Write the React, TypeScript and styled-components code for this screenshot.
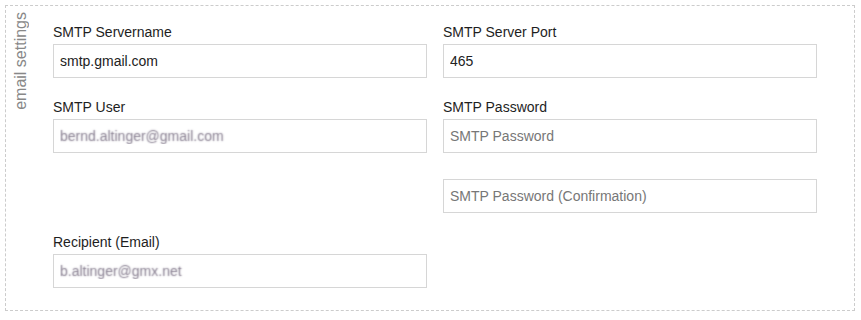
import React from 'react';
import styled, { createGlobalStyle } from 'styled-components';

const GlobalStyle = createGlobalStyle`
  html, body {
    margin: 0;
    padding: 0;
    background: #ffffff;
  }
  body {
    font-family: 'Liberation Sans', Arial, sans-serif;
    font-size: 14px;
    color: #222;
  }
  * {
    box-sizing: border-box;
  }
`;

const Fieldset = styled.fieldset`
  display: flex;
  align-items: flex-start;
  width: 850px;
  height: 306px;
  margin: 5px 6px 9px 5px;
  padding: 0 37px 22px 0;
  border: 1px dashed #cccccc;
  min-width: 0;
`;

const Legend = styled.div`
  flex: 0 0 18px;
  margin: 6px 23px 0 6px;
  writing-mode: vertical-rl;
  transform: rotate(180deg);
  font-size: 16px;
  line-height: 18px;
  color: #888888;
  white-space: nowrap;
`;

const Form = styled.div`
  display: grid;
  grid-template-columns: 374px 374px;
  column-gap: 16px;
  row-gap: 19px;
  margin-top: 16px;
`;

const Field = styled.div<{ $offset?: number }>`
  display: flex;
  flex-direction: column;
  margin-top: ${(p) => p.$offset || 0}px;
`;

const Label = styled.label`
  display: block;
  line-height: 20px;
  margin-bottom: 2px;
  font-size: 14px;
  color: #1e1e1e;
`;

const Input = styled.input<{ $blurred?: boolean }>`
  width: 100%;
  height: 34px;
  padding: 0 6px;
  border: 1px solid #d6d6d6;
  border-radius: 0;
  background: #fff;
  font-family: 'Liberation Sans', Arial, sans-serif;
  font-size: 14px;
  color: ${(p) => (p.$blurred ? 'transparent' : '#222')};
  text-shadow: ${(p) => (p.$blurred ? '0 0 1.5px rgba(120, 110, 130, 0.9)' : 'none')};
  outline: none;
  &::placeholder {
    color: #777;
    opacity: 1;
  }
`;

const Spacer = styled.div``;

export default function App() {
  return (
    <>
      <GlobalStyle />
      <Fieldset>
        <Legend>email settings</Legend>
        <Form>
          <Field>
            <Label>SMTP Servername</Label>
            <Input defaultValue="smtp.gmail.com" />
          </Field>
          <Field>
            <Label>SMTP Server Port</Label>
            <Input defaultValue="465" />
          </Field>
          <Field>
            <Label>SMTP User</Label>
            <Input $blurred defaultValue="bernd.altinger@gmail.com" />
          </Field>
          <Field>
            <Label>SMTP Password</Label>
            <Input type="password" placeholder="SMTP Password" />
          </Field>
          <Spacer />
          <Field $offset={7}>
            <Input type="password" placeholder="SMTP Password (Confirmation)" />
          </Field>
          <Field>
            <Label>Recipient (Email)</Label>
            <Input $blurred defaultValue="b.altinger@gmx.net" />
          </Field>
          <Spacer />
        </Form>
      </Fieldset>
    </>
  );
}
